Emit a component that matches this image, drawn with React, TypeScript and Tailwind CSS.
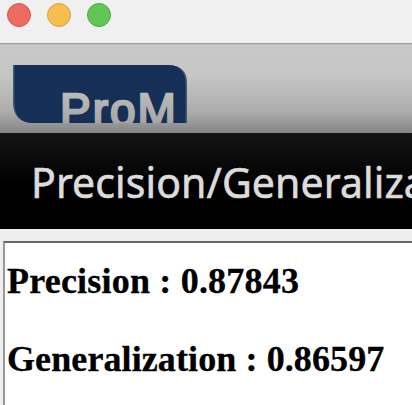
const lights = [
  "bg-[#ed6b60] border-[#d5544b]",
  "bg-[#f5bf50] border-[#d6a040]",
  "bg-[#62c656] border-[#4fa83f]",
];

function TitleBar() {
  return (
    <div className="flex h-[44px] shrink-0 gap-4 border-b border-[#9b9e9b] bg-[#f0f0f0] pl-[7px] pt-[3px]">
      {lights.map((c) => (
        <span key={c} className={`size-6 rounded-full border ${c}`} />
      ))}
    </div>
  );
}

function Logo() {
  return (
    <svg width="174" height="58" viewBox="0 0 174 58" role="img" aria-label="ProM">
      <defs>
        <linearGradient id="letters" gradientUnits="userSpaceOnUse" x1="0" y1="28" x2="0" y2="58">
          <stop offset="0" stopColor="#bababa" />
          <stop offset="1" stopColor="#a6a6a6" />
        </linearGradient>
      </defs>
      <path d="M0 0H156Q174 1 174 18V58H19Q1 57 0 39Z" fill="#425672" />
      <path d="M1.5 0H156Q172 1 172.500 18V58H19Q2 57 1.500 39Z" fill="#152f56" />
      <text
        x="47"
        y="61"
        fontFamily="Liberation Sans, sans-serif"
        fontSize="46"
        letterSpacing="2"
        fill="url(#letters)"
        stroke="url(#letters)"
        strokeWidth="2.3"
      >
        ProM
      </text>
    </svg>
  );
}

export default function App() {
  return (
    <div className="flex h-[405px] w-[412px] flex-col overflow-hidden bg-[#eeeeee]">
      <TitleBar />
      <header className="h-[89px] shrink-0 border-t border-[#bdbdbd] bg-[linear-gradient(#c8c8c8_0%,#c6c6c6_34%,#acacac_76%,#858585_100%)] pl-[13px] pt-5">
        <Logo />
      </header>
      <div className="h-24 shrink-0 overflow-hidden bg-[linear-gradient(#151515_0%,#000_55%)] pl-[31px]">
        <h1 className="whitespace-nowrap font-['Noto_Sans',sans-serif] text-[41px] leading-[98px] tracking-[0.1px] text-[#dcdcdc] [-webkit-text-stroke:0.6px_#dcdcdc]">
          Precision/Generalization
        </h1>
      </div>
      <main className="ml-[3px] mt-3 flex-1 border-l-2 border-t-2 border-l-[#999] border-t-[#666] bg-white pl-[2px] pt-[17px] font-['Liberation_Serif',serif] text-[36px] font-bold leading-[42px] text-black [-webkit-text-stroke:0.3px_black]">
        <h2 className="mb-9 whitespace-nowrap tracking-[0.2px]">Precision : 0.87843</h2>
        <h2 className="whitespace-nowrap tracking-[0.1px]">Generalization : 0.86597</h2>
      </main>
    </div>
  );
}
